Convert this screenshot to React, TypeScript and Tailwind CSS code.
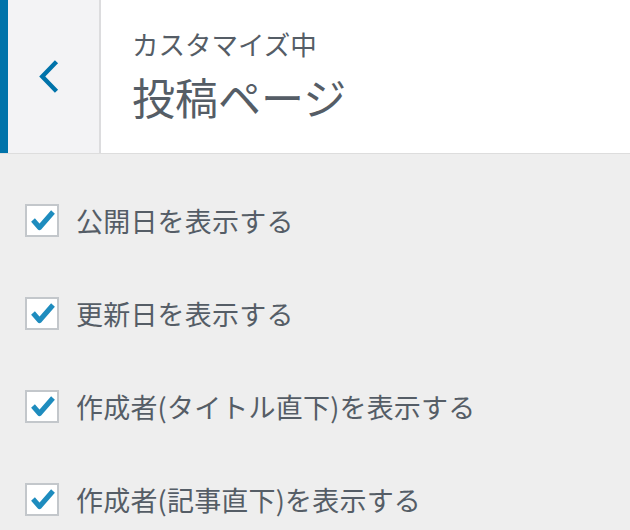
import React from 'react';

// the settings shown in the section, all ticked
const options = [
  '公開日を表示する',
  '更新日を表示する',
  '作成者(タイトル直下)を表示する',
  '作成者(記事直下)を表示する',
];

const font = { fontFamily: '"Noto Sans CJK JP", "Noto Sans", sans-serif' };

// back arrow of the customizer section header
function BackButton() {
  return (
    <div className="flex h-full w-[93px] shrink-0 items-center border-r-2 border-[#dcdcde] bg-[#f3f3f5]">
      <svg width="93" height="153" viewBox="0 0 93 153" className="block">
        <polyline
          points="48,63 35,76.5 48,90"
          fill="none"
          stroke="#0073aa"
          strokeWidth="4.5"
          strokeLinecap="square"
        />
      </svg>
    </div>
  );
}

// checked wordpress-style checkbox
function CheckBox() {
  return (
    <span className="flex h-[33px] w-[34px] shrink-0 items-center justify-center border-2 border-[#c3c7cb] bg-white">
      <svg width="29" height="29" viewBox="0 0 29 29">
        <polyline
          points="5,14 11.5,21.5 25,6"
          fill="none"
          stroke="#1e8cbe"
          strokeWidth="5"
          strokeLinejoin="round"
        />
      </svg>
    </span>
  );
}

export default function App() {
  return (
    <div className="h-[530px] w-[630px] overflow-hidden bg-[#eeeeee] text-[#555d66]" style={font}>
      <div className="flex h-[154px] border-b border-[#dddddd] bg-white">
        <div className="w-2 shrink-0 bg-[#0073aa]" />
        <BackButton />
        <div className="flex flex-col pl-[31px] pt-[26px]">
          <span className="text-[26.5px] leading-[36px]">カスタマイズ中</span>
          <span className="mt-[6px] text-[43px] leading-[56px]">投稿ページ</span>
        </div>
      </div>
      <div className="flex flex-col gap-[60px] pl-[25px] pt-[50px]">
        {options.map((label) => (
          <label key={label} className="flex h-[33px] items-center gap-[17px]">
            <CheckBox />
            <span className="text-[27px] leading-[33px] tracking-[0.2px]">{label}</span>
          </label>
        ))}
      </div>
    </div>
  );
}
